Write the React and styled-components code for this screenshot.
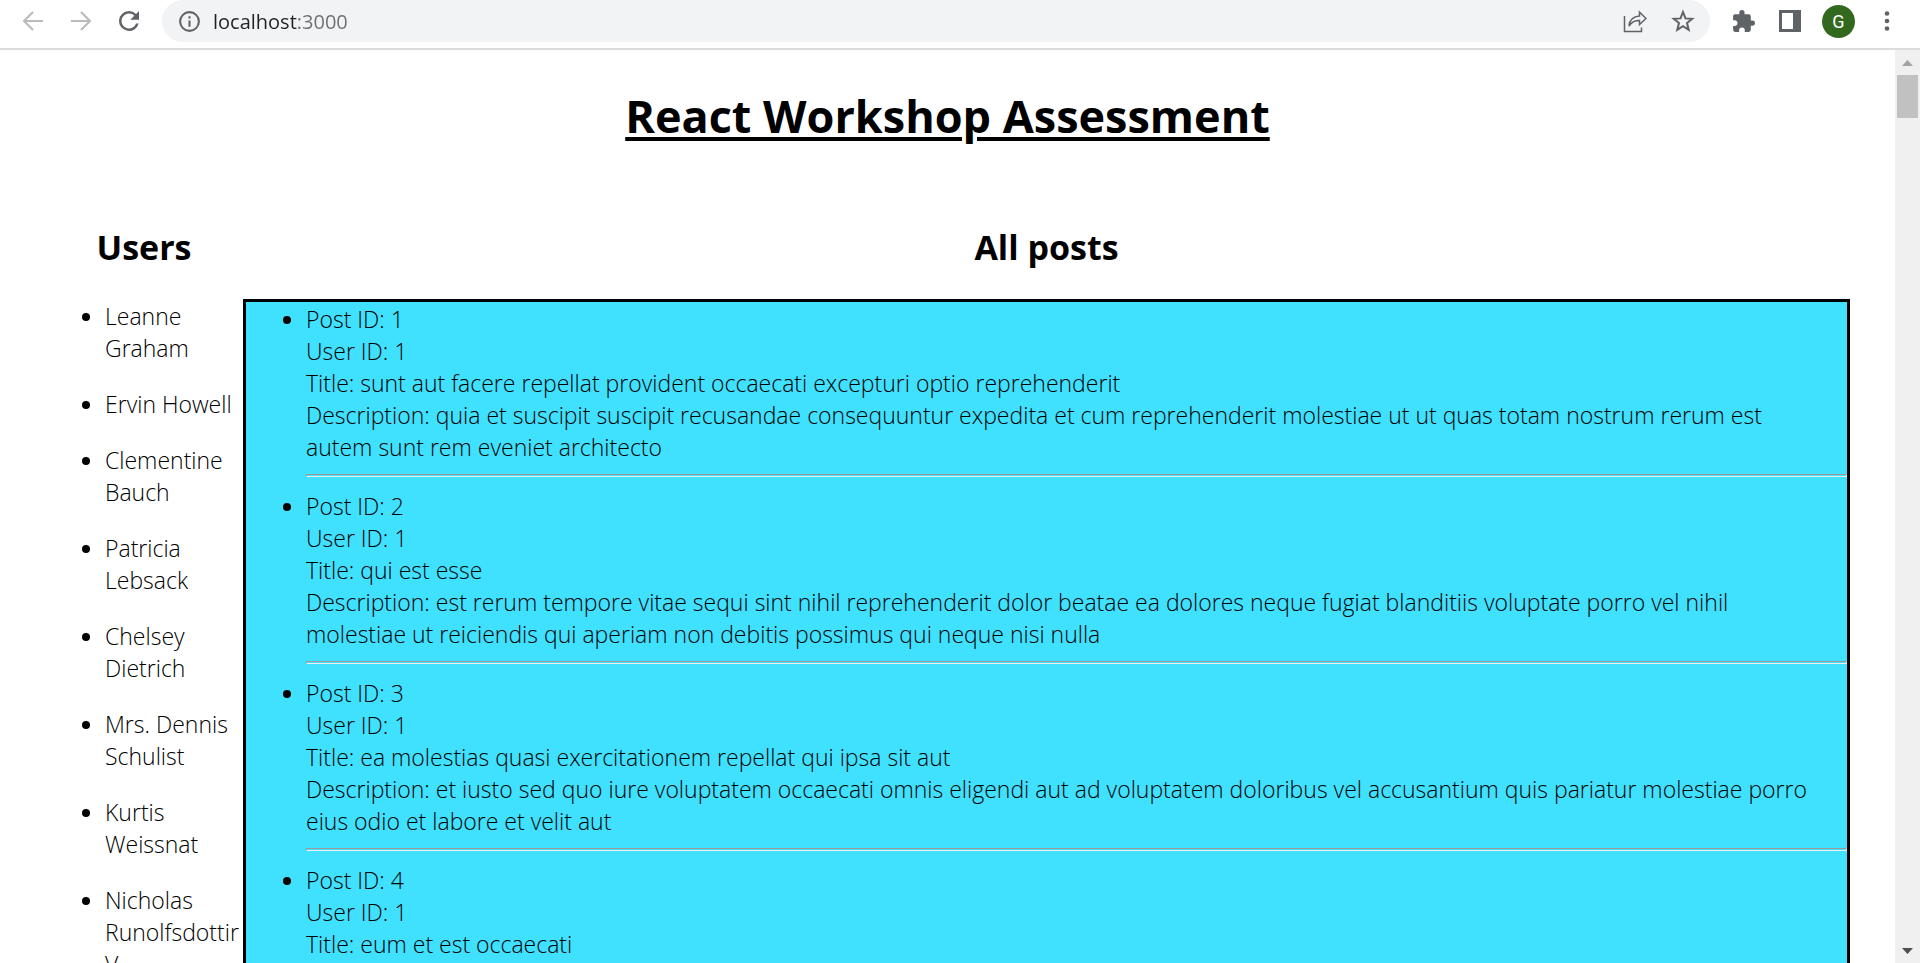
import React from "react";
import styled, { createGlobalStyle } from "styled-components";

const Global = createGlobalStyle`
  * { box-sizing: border-box; }
  body { margin: 0; background: #fff; color: #000; font-family: "Open Sans", "Segoe UI", sans-serif; }
`;

const Browser = styled.div`
  display: flex;
  flex-direction: column;
  height: 100vh;
  overflow: hidden;
`;

const Toolbar = styled.header`
  display: flex;
  align-items: center;
  flex: none;
  height: 50px;
  padding: 0 18px 6px 18px;
  border-bottom: 2px solid #dcdcdc;
`;

const IconGroup = styled.div`
  display: flex;
  align-items: center;
  gap: ${(p) => p.$gap}px;
`;

const IconButton = styled.button`
  display: flex;
  align-items: center;
  justify-content: center;
  width: 30px;
  height: 30px;
  padding: 0;
  border: 0;
  background: none;
  color: ${(p) => (p.disabled ? "#bababa" : "#5f6368")};
  svg { display: block; }
`;

const AddressBar = styled.div`
  display: flex;
  align-items: center;
  flex: 1;
  height: 42px;
  margin: 0 18px;
  padding: 0 12px;
  border-radius: 21px;
  background: #f1f3f4;
`;

const Address = styled.input`
  flex: 1;
  min-width: 0;
  margin: 0 9px;
  padding: 2px 0 0;
  border: 0;
  outline: 0;
  font: 20px/28px "Open Sans", sans-serif;
  color: transparent;
  background: linear-gradient(90deg, #202124 84px, #6b6f73 84px);
  background-clip: text;
`;

const Avatar = styled.button`
  width: 33px;
  height: 33px;
  padding: 0;
  border: 0;
  border-radius: 50%;
  background: #33691e;
  color: #fff;
  font: 18px/33px Roboto, sans-serif;
`;

const Viewport = styled.div`
  display: flex;
  flex: 1;
  min-height: 0;
`;

const Page = styled.main`
  flex: 1;
  min-width: 0;
  overflow: hidden;
`;

const Title = styled.h1`
  margin: 34px 0 30px;
  font-size: 45px;
  line-height: 64px;
  text-align: center;
  text-decoration: underline;
  text-decoration-thickness: 4px;
  text-underline-offset: 4px;
`;

const Columns = styled.div`
  display: flex;
  align-items: flex-start;
  padding: 45px 45px 0;
`;

const UsersColumn = styled.section`
  flex: 0 0 198px;
  min-width: 0;
`;

const PostsColumn = styled.section`
  position: relative;
  flex: 1;
  min-width: 0;
`;

const Heading = styled.h2`
  margin: 0 0 28px;
  font-size: 34px;
  line-height: 48px;
  text-align: center;
`;

const List = styled.ul`
  margin: 0;
  padding: 0 0 0 60px;
  font-size: 23px;
  font-weight: 300;
  line-height: 32px;
`;

const User = styled.li`
  padding: 1px 0 23px;
`;

const PostList = styled(List)`
  border: 3px solid #000;
  background: #40e0ff;
`;

const Post = styled.li`
  padding-top: 1px;
`;

const PostLine = styled.div`
  padding-right: 28px;
`;

const Divider = styled.hr`
  height: 3px;
  margin: 11px 0 12px;
  border: 1px solid;
  border-color: #9a9a9a #eee #eee #9a9a9a;
`;

const Scrollbar = styled.div`
  display: flex;
  flex-direction: column;
  flex: none;
  width: 25px;
  background: #f0f0f0;
`;

const ScrollButton = styled.button`
  display: flex;
  align-items: center;
  justify-content: center;
  height: 25px;
  padding: 0;
  border: 0;
  background: none;
  color: ${(p) => (p.disabled ? "#a3a3a3" : "#505050")};
`;

const Track = styled.div`
  flex: 1;
  padding: 0 2px;
`;

const Thumb = styled.div`
  height: 43px;
  background: #c1c1c1;
`;

const users = [
  "Leanne Graham",
  "Ervin Howell",
  "Clementine Bauch",
  "Patricia Lebsack",
  "Chelsey Dietrich",
  "Mrs. Dennis Schulist",
  "Kurtis Weissnat",
  "Nicholas Runolfsdottir V",
];

const posts = [
  {
    id: 1,
    title: "sunt aut facere repellat provident occaecati excepturi optio reprehenderit",
    body: "quia et suscipit suscipit recusandae consequuntur expedita et cum reprehenderit molestiae ut ut quas totam nostrum rerum est autem sunt rem eveniet architecto",
  },
  {
    id: 2,
    title: "qui est esse",
    body: "est rerum tempore vitae sequi sint nihil reprehenderit dolor beatae ea dolores neque fugiat blanditiis voluptate porro vel nihil molestiae ut reiciendis qui aperiam non debitis possimus qui neque nisi nulla",
  },
  {
    id: 3,
    title: "ea molestias quasi exercitationem repellat qui ipsa sit aut",
    body: "et iusto sed quo iure voluptatem occaecati omnis eligendi aut ad voluptatem doloribus vel accusantium quis pariatur molestiae porro eius odio et labore et velit aut",
  },
  {
    id: 4,
    title: "eum et est occaecati",
  },
];

const Icon = ({ size = 24, children }) => (
  <svg width={size} height={size} viewBox="0 0 24 24" fill="currentColor" aria-hidden="true">
    {children}
  </svg>
);

function ArrowIcon({ forward }) {
  return (
    <svg width="20" height="20" viewBox="0 0 20 20" fill="none" stroke="currentColor" strokeWidth="2" aria-hidden="true">
      <path d={forward ? "M0 10H18.5M10 1L19 10L10 19" : "M20 10H1.5M10 1L1 10L10 19"} />
    </svg>
  );
}

export default function App() {
  return (
    <>
      <Global />
      <Browser>
        <Toolbar>
          <IconGroup $gap={18}>
            <IconButton disabled aria-label="Back"><ArrowIcon /></IconButton>
            <IconButton disabled aria-label="Forward"><ArrowIcon forward /></IconButton>
            <IconButton aria-label="Reload">
              <Icon size={30}>
                <path d="M17.65 6.35A7.95 7.95 0 0 0 12 4a8 8 0 1 0 7.73 10h-2.08A6 6 0 1 1 12 6c1.66 0 3.14.69 4.22 1.78L13 11h7V4z" />
              </Icon>
            </IconButton>
          </IconGroup>
          <AddressBar>
            <IconButton aria-label="View site information">
              <Icon size={25}>
                <path d="M11 7h2v2h-2zm0 4h2v6h-2zm1-9a10 10 0 1 0 0 20 10 10 0 0 0 0-20zm0 18a8 8 0 1 1 0-16 8 8 0 0 1 0 16z" />
              </Icon>
            </IconButton>
            <Address aria-label="Address" defaultValue="localhost:3000" />
            <IconGroup $gap={18}>
              <IconButton aria-label="Share">
                <svg width="24" height="24" viewBox="0 0 24 24" fill="none" stroke="currentColor" strokeWidth="1.5" aria-hidden="true">
                  <path d="M1.5 7V22.500H18.500V18.500M6 17C6.500 11 10 7.500 16.500 7V3L23 9.500L16.500 15.500V11.500C11.500 11.500 8.500 13 6 17Z" />
                </svg>
              </IconButton>
              <IconButton aria-label="Bookmark this tab">
                <svg width="24" height="24" viewBox="0 0 24 24" fill="none" stroke="currentColor" strokeWidth="2" aria-hidden="true">
                  <path d="M12 3L14.500 9.400L21.200 9.800L16 14.100L17.700 20.800L12 17.100L6.300 20.800L8 14.100L2.800 9.800L9.500 9.400Z" />
                </svg>
              </IconButton>
            </IconGroup>
          </AddressBar>
          <IconGroup $gap={17}>
            <IconButton aria-label="Extensions">
              <Icon size={25}>
                <path d="M20.500 11H19V7a2 2 0 0 0-2-2h-4V3.500a2.500 2.500 0 0 0-5 0V5H4a2 2 0 0 0-2 2v3.800h1.500a2.700 2.700 0 0 1 0 5.400H2V20a2 2 0 0 0 2 2h3.800v-1.500a2.700 2.700 0 0 1 5.400 0V22H17a2 2 0 0 0 2-2v-4h1.500a2.500 2.500 0 0 0 0-5z" />
              </Icon>
            </IconButton>
            <IconButton aria-label="Side panel">
              <svg width="22" height="22" viewBox="0 0 22 22" fill="currentColor" aria-hidden="true">
                <path fillRule="evenodd" d="M0 0H22V22H0ZM3 3V19H14V3Z" />
              </svg>
            </IconButton>
            <Avatar aria-label="Profile">G</Avatar>
            <IconButton aria-label="Menu">
              <svg width="6" height="22" viewBox="0 0 6 22" fill="currentColor" aria-hidden="true">
                <circle cx="3" cy="3.500" r="2.300" />
                <circle cx="3" cy="11" r="2.300" />
                <circle cx="3" cy="18.500" r="2.300" />
              </svg>
            </IconButton>
          </IconGroup>
        </Toolbar>
        <Viewport>
          <Page>
            <Title>React Workshop Assessment</Title>
            <Columns>
              <UsersColumn>
                <Heading>Users</Heading>
                <List>
                  {users.map((name) => <User key={name}>{name}</User>)}
                </List>
              </UsersColumn>
              <PostsColumn>
                <Heading>All posts</Heading>
                <PostList>
                  {posts.map((post) => (
                    <Post key={post.id}>
                      <PostLine>Post ID: {post.id}</PostLine>
                      <PostLine>User ID: 1</PostLine>
                      <PostLine>Title: {post.title}</PostLine>
                      {post.body && <PostLine>Description: {post.body}</PostLine>}
                      <Divider />
                    </Post>
                  ))}
                </PostList>
              </PostsColumn>
            </Columns>
          </Page>
          <Scrollbar>
            <ScrollButton disabled aria-label="Scroll up">
              <svg width="11" height="6" viewBox="0 0 11 6" fill="currentColor" aria-hidden="true"><path d="M0 6L5.500 0L11 6Z" /></svg>
            </ScrollButton>
            <Track><Thumb /></Track>
            <ScrollButton aria-label="Scroll down">
              <svg width="11" height="6" viewBox="0 0 11 6" fill="currentColor" aria-hidden="true"><path d="M0 0L5.500 6L11 0Z" /></svg>
            </ScrollButton>
          </Scrollbar>
        </Viewport>
      </Browser>
    </>
  );
}
